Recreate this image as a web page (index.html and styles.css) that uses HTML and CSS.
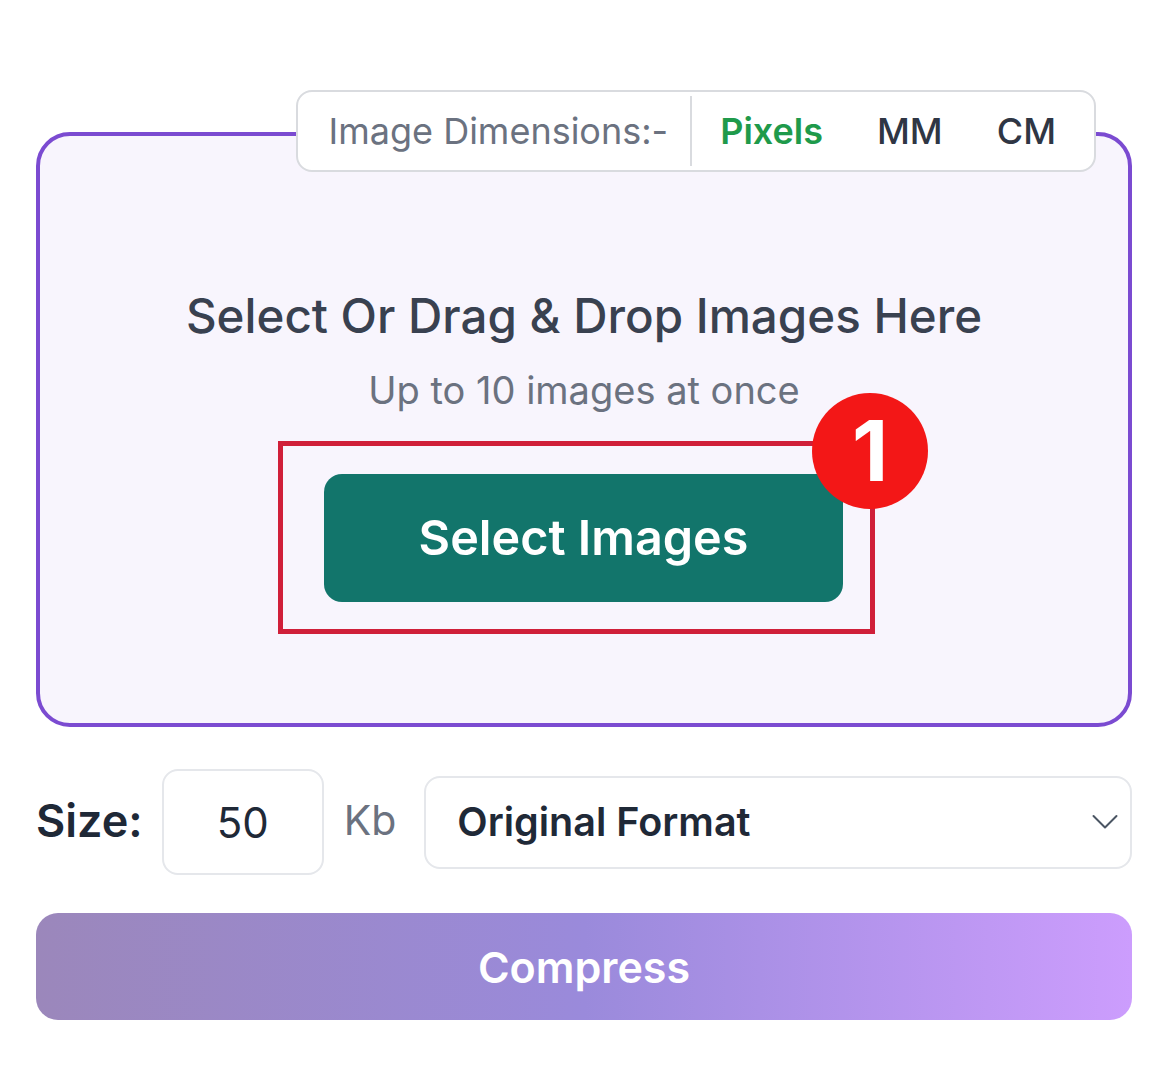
FILE: index.html
```html
<!DOCTYPE html>
<html lang="en">
<head>
    <meta charset="UTF-8">
    <title>Image Compressor</title>
    <link rel="stylesheet" href="styles.css">
    <meta name="viewport" content="width=device-width, initial-scale=1.0">
</head>
<body>
    <div class="tool">
        <div class="dropzone">
            <div class="units">
                <span class="units-label">Image Dimensions:-</span>
                <span class="units-divider"></span>
                <button class="unit active">Pixels</button>
                <button class="unit">MM</button>
                <button class="unit">CM</button>
            </div>

            <h2 class="drop-title">Select Or Drag &amp; Drop Images Here</h2>
            <p class="drop-sub">Up to 10 images at once</p>

            <div class="highlight">
                <button class="select-btn">Select Images</button>
                <span class="step-badge">1</span>
            </div>
        </div>

        <div class="options">
            <label class="size-label" for="size">Size:</label>
            <input class="size-input" id="size" type="text" value="50">
            <span class="size-unit">Kb</span>
            <div class="format">
                <span class="format-value">Original Format</span>
                <svg class="chevron" width="26" height="16" viewBox="0 0 26 16">
                    <path d="M1.5 2 L13 13.5 L24.5 2" fill="none" stroke="#4b5563" stroke-width="2" stroke-linecap="round" stroke-linejoin="round"/>
                </svg>
            </div>
        </div>

        <button class="compress">Compress</button>
    </div>
</body>
</html>
```

FILE: styles.css
```css
body {
    margin: 0;
    background: #fff;
    font-family: Inter, "Noto Sans", sans-serif;
    color: #374151;
}

.tool {
    padding: 132px 36px 0;
}

/* upload area */
.dropzone {
    position: relative;
    height: 587px;
    border: 4px solid #7b4bd1;
    border-radius: 34px;
    background: #f8f5fd;
    display: flex;
    flex-direction: column;
    align-items: center;
}

.units {
    position: absolute;
    top: -46px;
    right: 32px;
    height: 78px;
    display: flex;
    align-items: center;
    background: #fff;
    border: 2px solid #d9dbdf;
    border-radius: 16px;
    padding: 0 38px 0 31px;
}

.units-label {
    font-size: 36px;
    color: #6b7280;
    margin-right: 22px;
}

.units-divider {
    width: 2px;
    height: 70px;
    background: #d9dbdf;
    margin-right: 28px;
}

.unit {
    border: none;
    background: none;
    padding: 0;
    font-family: inherit;
    font-size: 36px;
    font-weight: 500;
    color: #2f3644;
    margin-left: 54px;
}

.unit.active {
    color: #1f9a4b;
    font-weight: 600;
    margin-left: 0;
}

.drop-title {
    margin: 148px 0 0;
    font-size: 47.5px;
    font-weight: 500;
    color: #394150;
    line-height: 64px;
}

.drop-sub {
    margin: 17px 0 0;
    font-size: 38px;
    color: #6b7280;
    line-height: 50px;
}

.highlight {
    position: relative;
    margin-top: 26px;
    margin-left: -15px;
    width: 587px;
    height: 183px;
    border: 5px solid #d01f39;
    display: flex;
    align-items: center;
    justify-content: center;
}

.select-btn {
    width: 519px;
    height: 128px;
    margin-left: 14px;
    border: none;
    border-radius: 18px;
    background: #12756b;
    color: #fff;
    font-family: inherit;
    font-size: 48.5px;
    font-weight: 600;
}

.step-badge {
    position: absolute;
    top: -53px;
    right: -58px;
    width: 116px;
    height: 116px;
    border-radius: 50%;
    background: #f31717;
    color: #fff;
    font-size: 84px;
    font-weight: 700;
    display: flex;
    align-items: center;
    justify-content: center;
    line-height: 1;
}

/* size + format row */
.options {
    display: flex;
    align-items: center;
    margin-top: 42px;
}

.size-label {
    font-size: 45px;
    font-weight: 600;
    color: #1f2937;
    margin-right: 19px;
    margin-top: -4px;
}

.size-input {
    box-sizing: border-box;
    width: 162px;
    height: 106px;
    border: 2px solid #e5e7eb;
    border-radius: 16px;
    text-align: center;
    font-family: inherit;
    font-size: 42px;
    color: #1f2937;
    outline: none;
}

.size-unit {
    font-size: 41px;
    color: #6b7280;
    margin: -4px 28px 0 20px;
}

.format {
    flex: 1;
    box-sizing: border-box;
    height: 93px;
    border: 2px solid #e5e7eb;
    border-radius: 16px;
    background: #fff;
    display: flex;
    align-items: center;
    justify-content: space-between;
    padding: 0 12px 0 31px;
}

.format-value {
    font-size: 39.5px;
    font-weight: 600;
    color: #1f2937;
}

.compress {
    display: block;
    width: 100%;
    height: 107px;
    margin-top: 38px;
    border: none;
    border-radius: 22px;
    background: linear-gradient(90deg, #9b87bb 0%, #9a8adb 50%, #cc9dfd 100%);
    color: #fff;
    font-family: inherit;
    font-size: 43px;
    font-weight: 600;
}
```
